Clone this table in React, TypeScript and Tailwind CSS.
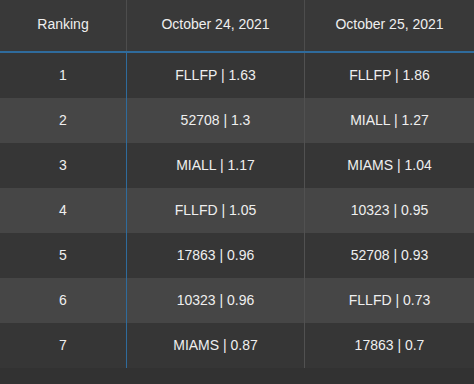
const rows = [
  { rank: 1, a: "FLLFP | 1.63", b: "FLLFP | 1.86" },
  { rank: 2, a: "52708 | 1.3", b: "MIALL | 1.27" },
  { rank: 3, a: "MIALL | 1.17", b: "MIAMS | 1.04" },
  { rank: 4, a: "FLLFD | 1.05", b: "10323 | 0.95" },
  { rank: 5, a: "17863 | 0.96", b: "52708 | 0.93" },
  { rank: 6, a: "10323 | 0.96", b: "FLLFD | 0.73" },
  { rank: 7, a: "MIAMS | 0.87", b: "17863 | 0.7" },
];

export default function App() {
  return (
    <div
      className="w-[474px] h-[384px] bg-[#323232] text-[#efefef] text-[14px] overflow-hidden"
      style={{ fontFamily: '"Liberation Sans", Arial, sans-serif' }}
    >
      <div className="grid grid-cols-[127px_178px_1fr] h-[53px] bg-[#393939] border-b-2 border-[#2f6b9c]">
        <div className="flex items-center justify-center pb-[2px] border-r border-[#4d4d4d]">Ranking</div>
        <div className="flex items-center justify-center pb-[2px] border-r border-[#4d4d4d]">October 24, 2021</div>
        <div className="flex items-center justify-center pb-[2px]">October 25, 2021</div>
      </div>
      {rows.map((r, i) => (
        <div
          key={r.rank}
          className={`grid grid-cols-[127px_178px_1fr] h-[45px] ${i % 2 === 0 ? "bg-[#363636]" : "bg-[#464646]"}`}
        >
          <div className="flex items-center justify-center border-r border-[#2f6b9c]">{r.rank}</div>
          <div className="flex items-center justify-center border-r border-[#515151]">{r.a}</div>
          <div className="flex items-center justify-center">{r.b}</div>
        </div>
      ))}
    </div>
  );
}
